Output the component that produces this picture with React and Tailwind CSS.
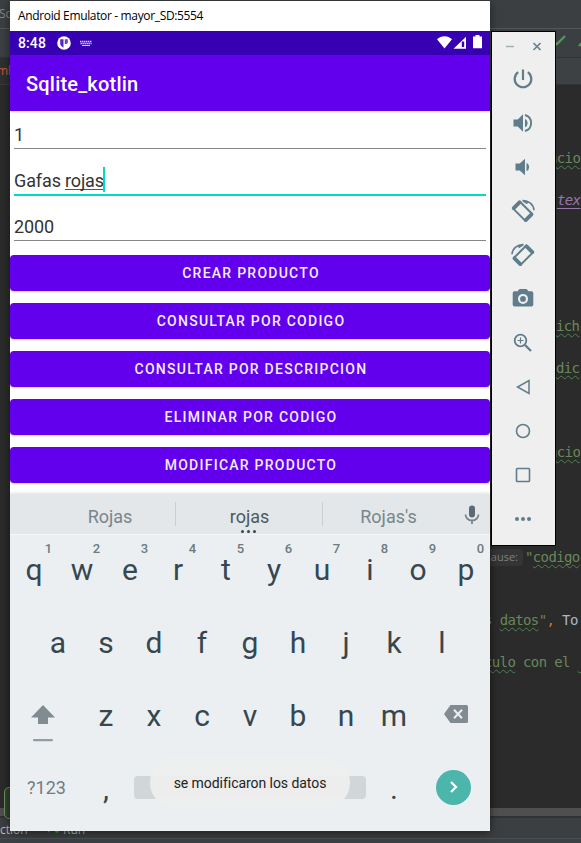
import React from "react";

const MONO = "font-['DejaVu_Sans_Mono',monospace]";
const WAVY = "underline decoration-wavy decoration-[#4f7f55] decoration-[0.8px] underline-offset-[2px] [text-decoration-skip-ink:none]";

function CodeRow({ className = "", children }) {
  return <div className={`flex h-[21px] items-center whitespace-pre ${className}`}>{children}</div>;
}

function Blank({ className }) {
  return <div className={className} />;
}

function Ide() {
  return (
    <div className="relative flex h-[843px] w-[581px] flex-col overflow-hidden bg-[#2b2b2b]">
      <div className="flex h-[29px] items-center border-b border-[#555759] bg-[#3c3f41] font-['Open_Sans',sans-serif] text-[12px] text-[#85888a]">
        <span className="-ml-px">Sq</span>
      </div>
      <div className="flex h-[29px] items-center border-b border-[#323435] bg-[#3c3f41] pl-[554px]">
        <svg width="27" height="12" viewBox="0 0 27 12" fill="none" stroke="#499c54" strokeWidth="2.400" className="-mt-1">
          <path d="M0 10l3-1L11 1M25 11l4-4" />
        </svg>
      </div>
      <div className="flex h-[27px]">
        <div className="flex w-[30px] items-center border-b border-[#3a3a3a] bg-[#2e2f30] font-['Open_Sans',sans-serif] text-[12px] text-[#c75a3f]">
          <span className="-ml-[3px]">ml</span>
        </div>
        <div className="flex-1 border-b border-[#323232] bg-[#3e4143]" />
      </div>
      <div className={`flex h-[723px] flex-col pt-[63px] text-[14px] tracking-[-0.62px] text-[#6a8759] ${MONO}`}>
        <CodeRow className="pl-[549px]"><span className={WAVY}>ncio</span></CodeRow>
        <Blank className="h-[21px]" />
        <CodeRow className="pl-[557px]"><span className="text-[#9876aa] italic underline underline-offset-[3px]">tex</span></CodeRow>
        <Blank className="h-[105px]" />
        <CodeRow className="pl-[556px]"><span className={WAVY}>ich</span></CodeRow>
        <Blank className="h-[21px]" />
        <CodeRow className="pl-[556px]"><span className={WAVY}>dic</span></CodeRow>
        <Blank className="h-[63px]" />
        <CodeRow className="pl-[549px]"><span className={WAVY}>ncio</span></CodeRow>
        <Blank className="h-[84px]" />
        <CodeRow className="pl-[486px]">
          <span className="flex h-[17px] w-[37px] items-center justify-end rounded-[4px] bg-[#353535] pr-[5px] font-['Open_Sans',sans-serif] text-[11px] tracking-normal text-[#808080]">ause:</span>
          <span className="ml-[2px]">"<span className={WAVY}>codigo</span></span>
        </CodeRow>
        <Blank className="h-[42px]" />
        <CodeRow className="pl-[484px]">
          <span>s <span className={WAVY}>datos</span>"</span>
          <span className="text-[#cc7832]">, </span>
          <span className="text-[#a9b7c6]">To</span>
        </CodeRow>
        <Blank className="h-[21px]" />
        <CodeRow className="pl-[484px]">
          <span><span className={WAVY}>culo</span> con el <span className={WAVY}> </span></span>
        </CodeRow>
      </div>
      <div className="h-[8px] bg-[#4f4f4f]" />
      <div className="h-[2px] bg-[#323232]" />
      <div className="flex h-[21px] items-center border-b border-[#4a4f52] bg-[#3c3f41] font-['Open_Sans',sans-serif] text-[12px] text-[#bbbbbb]">
        <span className="w-[48px] pt-[3px]">ction</span>
        <svg width="13" height="13" viewBox="0 0 13 13" className="mt-[7px]">
          <path d="M0 0l6 3.500-6 4z" fill="#8a8d8f" />
          <circle cx="9" cy="5.500" r="2.200" fill="#00d900" />
        </svg>
        <span className="ml-[2px] pt-[3px]">Run</span>
      </div>
      <div className="flex-1 bg-[#3c4145]" />
      <div className="absolute top-[787px] left-[4px] h-[32px] w-[60px] rounded-[5px] border border-[#6f9163] bg-[#33432f]" />
    </div>
  );
}

function StatusBar() {
  return (
    <div className="flex h-[24px] items-center bg-[#3700b3] pl-[8px] text-white">
      <span className="w-[39px] text-[14px] leading-[24px] font-medium tracking-[0.1px]">8:48</span>
      <svg width="14" height="14" viewBox="0 0 14 14">
        <circle cx="7" cy="7" r="6.800" fill="#fff" />
        <path d="M3.200 3.200h3.300v8.600A5.300 5.300 0 0 1 3.200 8z" fill="#3700b3" opacity=".85" />
        <path d="M7.800 3.200h3v3.200a2 2 0 0 1-2 1.600h-1z" fill="#3700b3" opacity=".75" />
      </svg>
      <svg width="12" height="7" viewBox="0 0 12 7" className="ml-[9px]" fill="none" stroke="#d6caf0">
        <path d="M0 1.500h12M0.500 3.500h11" strokeDasharray="1.400 0.600" strokeWidth="1.300" />
        <path d="M2 5.500h8" strokeWidth="1" />
      </svg>
      <div className="flex-1" />
      <svg width="46" height="16" viewBox="0 0 46 16" fill="#fff" className="mr-[8px] -mt-[2px] shrink-0">
        <path d="M1 5.200C3.200 3.300 5.800 2.300 8.500 2.300S13.800 3.300 16 5.200L8.500 14.500z" />
        <path d="M17.500 14.700L30 2.700v12z" />
        <path d="M25.800 7.500h2.400v5.500h-2.400z" fill="#3700b3" />
        <path d="M39.500 1h4v1.500H46V14.300H37V2.500h2.500z" />
      </svg>
    </div>
  );
}

function Field({ className = "", active, children }) {
  return (
    <div className={`mx-[4px] flex items-end text-[18px] leading-[22px] tracking-[-0.1px] text-[#333] ${active ? "border-b-2 border-[#03dac5]" : "border-b border-[#868686]"} ${className}`}>
      {children}
    </div>
  );
}

function ActionButton({ children }) {
  return (
    <button className="flex h-[36px] w-full shrink-0 items-center justify-center rounded-[4px] bg-[#6200ee] pl-[2px] text-[14px] font-medium tracking-[1.25px] text-[#f4ecfe] shadow-[0_1px_2px_rgba(0,0,0,0.2)]">
      {children}
    </button>
  );
}

function Key({ children, hint }) {
  return (
    <div className="relative flex h-full w-[48px] items-center justify-center">
      <span>{children}</span>
      {hint && <span className="absolute top-[6px] left-[23px] w-[31px] text-center text-[13px] leading-[16px] font-medium text-[#6d7b80]">{hint}</span>}
    </div>
  );
}

function Keyboard() {
  return (
    <div className="flex h-[337px] flex-col bg-[#eceff1] text-[#37474f] shadow-[0_-1px_3px_rgba(0,0,0,0.12)]">
      <div className="flex h-[41px] items-center border-b border-[#f5f7f8] bg-[#e3e7e9] text-[18px] text-[#77868c]">
        <div className="w-[165px] pt-[5px] pl-[35px] text-center">Rojas</div>
        <div className="h-[24px] w-px bg-[#c9ced0]" />
        <div className="relative w-[146px] pt-[5px] pl-px text-center text-[#4b5a61]">
          rojas
          <span className="absolute bottom-[-3px] left-[65px] flex gap-[3px]">
            <i className="size-[3px] rounded-full bg-[#37474f]" />
            <i className="size-[3px] rounded-full bg-[#37474f]" />
            <i className="size-[3px] rounded-full bg-[#37474f]" />
          </span>
        </div>
        <div className="h-[24px] w-px bg-[#c9ced0]" />
        <div className="w-[131px] pt-[5px] text-center">Rojas's</div>
        <svg width="16" height="20" viewBox="0 0 16 20" className="mt-[2px] ml-[10px]" fill="none">
          <rect x="5" y="0.500" width="6" height="12" rx="3" fill="#5b6b73" />
          <path d="M1.500 9.500a6.500 6 0 0 0 13 0M8 15.500V19" stroke="#77868c" strokeWidth="1.800" />
        </svg>
      </div>
      <div className="flex h-[68px] text-[30px]">
        {"qwertyuiop".split("").map((k, i) => <Key key={k} hint={String((i + 1) % 10)}>{k}</Key>)}
      </div>
      <div className="mt-[2px] flex h-[73px] justify-center pt-[2px] text-[30px]">
        {"asdfghjkl".split("").map((k) => <Key key={k}>{k}</Key>)}
      </div>
      <div className="flex h-[73px] pt-[2px] text-[30px]">
        <div className="flex w-[72px] flex-col items-center pt-[25px] pr-[6px]">
          <svg width="24" height="37" viewBox="0 0 24 37">
            <path d="M12 0L24 12.500H17V19H7V12.500H0z" fill="#808c90" />
            <rect x="2" y="34" width="20" height="2.200" rx="1" fill="#939da1" />
          </svg>
        </div>
        {"zxcvbnm".split("").map((k) => <Key key={k}>{k}</Key>)}
        <div className="flex flex-1 justify-center pt-[25px] pl-[4px]">
          <svg width="24" height="18" viewBox="0 0 24 18">
            <path d="M6.500 0H22.500A1.500 1.500 0 0 1 24 1.500v15a1.500 1.500 0 0 1-1.500 1.500H6.500L0 9z" fill="#808c90" />
            <path d="M10 4.700l8 8.600M18 4.700l-8 8.600" stroke="#eceff1" strokeWidth="2" />
          </svg>
        </div>
      </div>
      <div className="flex h-[72px] items-center text-[30px]">
        <div className="w-[72px] pl-px text-center text-[18px] text-[#6f7e84]">?123</div>
        <div className="w-[48px] pt-[2px] text-center">,</div>
        <div className="ml-[4px] h-[23px] w-[232px] rounded-[4px] bg-[#d1d6d8]" />
        <div className="ml-[4px] w-[48px] pt-[2px] text-center">.</div>
        <div className="ml-[18px] flex size-[35px] items-center justify-center rounded-full bg-[#4db6ac]">
          <svg width="10" height="14" viewBox="0 0 10 14" fill="none" stroke="#fff" strokeWidth="2.200">
            <path d="M2 2l5 5-5 5" />
          </svg>
        </div>
      </div>
    </div>
  );
}

function Phone() {
  return (
    <div className="absolute top-px left-[10px] flex h-[830px] w-[480px] flex-col bg-white font-['Roboto',sans-serif] shadow-[0_2px_9px_rgba(0,0,0,0.5)]">
      <div className="flex h-[30px] shrink-0 items-center pl-[8px] font-['Open_Sans',sans-serif] text-[12px] tracking-[-0.35px] text-black">
        Android Emulator - mayor_SD:5554
      </div>
      <StatusBar />
      <div className="flex h-[56px] items-center bg-[#6200ee] pt-[2px] pl-[16px] text-[20px] font-medium tracking-[0.2px] text-white shadow-[0_1px_2px_rgba(0,0,0,0.18)]">
        Sqlite_kotlin
      </div>
      <Field className="h-[38px] pb-[2px]">1</Field>
      <Field className="h-[47px] pb-[2px]" active>
        Gafas <span className="ml-[4px] underline decoration-[#555] decoration-1 underline-offset-[2px] [text-decoration-skip-ink:none]">rojas</span>
        <span className="-ml-[0.500px] h-[25px] w-[2px] bg-[#03dac5]" />
      </Field>
      <Field className="h-[45px] pb-[2px]">2000</Field>
      <div className="mt-[14px] flex h-[239px] flex-col gap-[12px]">
        <ActionButton>CREAR PRODUCTO</ActionButton>
        <ActionButton>CONSULTAR POR CODIGO</ActionButton>
        <ActionButton>CONSULTAR POR DESCRIPCION</ActionButton>
        <ActionButton>ELIMINAR POR CODIGO</ActionButton>
        <ActionButton>MODIFICAR PRODUCTO</ActionButton>
      </div>
      <Keyboard />
      <div className="absolute top-[756px] left-[140px] flex h-[51px] w-[200px] items-center justify-center rounded-[25px] bg-[#eeeeee]/95 pt-[2px] text-[14px] tracking-[-0.05px] text-[#222]">
        se modificaron los datos
      </div>
    </div>
  );
}

function Tool({ children }) {
  return (
    <div className="flex h-[44px] items-center justify-center pr-[2px]">
      <svg width="24" height="24" viewBox="0 0 24 24" fill="none" stroke="#607d8b" strokeWidth="2">{children}</svg>
    </div>
  );
}

function RotateGlyph() {
  return (
    <>
      <path d="M9 2.800L2.200 9.600L14.200 21.600L21 14.800z" strokeWidth="2" strokeLinejoin="round" />
      <path d="M8.500 3.300L2.700 9.100M14.700 21.100L20.500 15.300" strokeWidth="3.800" strokeLinecap="round" />
      <path d="M11.500 1.600C17.500 1.300 22.600 5.500 23 11.200M12 1.800l4.500 2.700" strokeWidth="1.600" />
    </>
  );
}

function Toolbar() {
  return (
    <div className="absolute top-[31px] left-[491px] flex h-[515px] w-[65px] flex-col border border-black bg-[#efefef]">
      <div className="flex h-[25px] items-center pt-[3px] pl-[14px]">
        <svg width="36" height="9" viewBox="0 0 36 9" fill="none">
          <path d="M0 4.500h8" stroke="#9fb0b8" strokeWidth="1.500" />
          <path d="M27.500 1l7 7M34.500 1l-7 7" stroke="#6a838f" strokeWidth="1.700" />
        </svg>
      </div>
      <Tool>
        <path d="M7.200 5.200a8.300 8.300 0 1 0 9.600 0M12 2.500v10.500" strokeWidth="2.200" />
      </Tool>
      <Tool>
        <path d="M2.500 8.500h4.200L12 3.200v17.600L6.700 15.500H2.500z" fill="#607d8b" stroke="none" />
        <path d="M14 7.700v8.600a4.800 4.800 0 0 0 0-8.600z" fill="#607d8b" stroke="none" />
        <path d="M14 4a8.300 8.300 0 0 1 0 16" strokeWidth="1.900" />
      </Tool>
      <Tool>
        <path d="M4.500 8.500h4.200L14 3.700v16.600L8.700 15.500H4.500z" fill="#607d8b" stroke="none" />
        <path d="M15.500 7.700v8.600a4.800 4.800 0 0 0 0-8.600z" fill="#607d8b" stroke="none" />
      </Tool>
      <Tool><RotateGlyph /></Tool>
      <Tool><g transform="matrix(-1 0 0 1 24 0)"><RotateGlyph /></g></Tool>
      <Tool>
        <path fillRule="evenodd" d="M8.500 2h7l2 2.300H20.500a1.800 1.800 0 0 1 1.800 1.800v11.600a1.800 1.800 0 0 1-1.800 1.800h-17a1.800 1.800 0 0 1-1.800-1.800V6.100a1.800 1.800 0 0 1 1.800-1.800h3zM12 6.900a5 5 0 1 0 0 10a5 5 0 1 0 0-10z" fill="#607d8b" stroke="none" />
        <circle cx="12" cy="11.900" r="2.900" fill="#607d8b" stroke="none" />
      </Tool>
      <Tool>
        <circle cx="9.500" cy="9.500" r="5.800" strokeWidth="1.800" />
        <path d="M14 14l6 6" strokeWidth="2.300" />
        <path d="M6.500 9.500h6M9.500 6.500v6" strokeWidth="1.200" />
      </Tool>
      <Tool><path d="M18 5.500v13L6.500 12z" strokeWidth="1.500" /></Tool>
      <Tool><circle cx="12" cy="12" r="6.500" strokeWidth="1.600" /></Tool>
      <Tool><rect x="5.500" y="5.500" width="13" height="13" rx="0.800" strokeWidth="1.600" /></Tool>
      <Tool>
        <g fill="#607d8b" stroke="none">
          <circle cx="6" cy="12" r="2" />
          <circle cx="12" cy="12" r="2" />
          <circle cx="18" cy="12" r="2" />
        </g>
      </Tool>
    </div>
  );
}

export default function App() {
  return (
    <div className="relative h-[843px] w-[581px] overflow-hidden">
      <Ide />
      <Phone />
      <Toolbar />
    </div>
  );
}
